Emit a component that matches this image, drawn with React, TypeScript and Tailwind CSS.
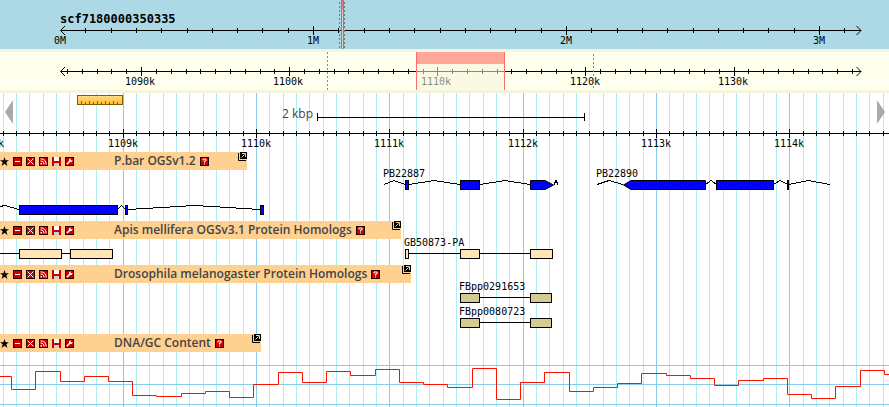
import type { ReactNode } from "react";

const range = (from: number, to: number) =>
  Array.from({ length: to - from + 1 }, (_, i) => from + i);

const MONO = "font-['DejaVu_Sans_Mono',monospace] text-[10px]";

const major = (k: number, first: number) => (((k - first) % 10) + 10) % 10 === 0;

/* ---------- rulers ---------- */

type RulerProps = {
  y: number;
  base: number;
  step: number;
  from: number;
  to: number;
  firstMajor: number;
};

function Ticks({ y, base, step, from, to, firstMajor }: RulerProps) {
  return (
    <g>
      {range(from, to).map((k) => {
        const x = Math.floor(base + k * step);
        const big = major(k, firstMajor);
        return (
          <rect key={k} x={x} y={big ? y - 4 : y - 2} width="1" height={big ? 9 : 5} />
        );
      })}
    </g>
  );
}

function ArrowLine({ y }: { y: number }) {
  return (
    <g>
      <rect x="61" y={y} width="800" height="1" />
      <path
        d={`M65 ${y - 4}L60.5 ${y + 0.5}L65 ${y + 5}M856.5 ${y - 4}L861 ${y + 0.5}L856.5 ${y + 5}`}
        fill="none"
        stroke="black"
      />
    </g>
  );
}

function Overview() {
  return (
    <section aria-label="Overview" className="h-[49px] bg-[#add8e6]">
      <svg className={`block h-full w-full ${MONO}`}>
        <text x="60" y="23" className="text-[12px] font-bold">
          scf7180000350335
        </text>
        <ArrowLine y={30} />
        <Ticks y={30} base={60.5} step={25.3} from={1} to={31} firstMajor={0} />
        {["0M", "1M", "2M", "3M"].map((t, i) => (
          <text key={t} x={54 + i * 253} y="44">
            {t}
          </text>
        ))}
        <rect x="341" y="0" width="3" height="10" fill="#e08080" />
        <rect x="342" y="10" width="1" height="39" fill="#d8d0c8" />
        <rect x="341" y="0" width="1" height="49" fill="#dd5c5c" />
        <rect x="343" y="0" width="1" height="49" fill="#dd5c5c" />
        <path d="M339.5 2V49M344.5 2V49" stroke="#777" strokeDasharray="2 2" />
      </svg>
    </section>
  );
}

function Region() {
  return (
    <section
      aria-label="Region"
      className="h-[44px] border-y-[3px] border-[#f5f5dc] bg-[#ffffee]"
    >
      <svg className={`block h-full w-full ${MONO}`}>
        <ArrowLine y={19} />
        <Ticks y={19} base={141.6} step={14.812} from={-5} to={48} firstMajor={0} />
        {["1090k", "1100k", "1110k", "1120k", "1130k"].map((t, i) => (
          <text key={t} x={125 + Math.round(i * 148.2)} y="33">
            {t}
          </text>
        ))}
        <path d="M327.5 0V38M593.5 2V38" stroke="#888" strokeDasharray="2 2" />
        <rect x="416" y="0" width="89" height="38" fill="#f5f5dc" opacity="0.55" />
        <rect x="416" y="0" width="89" height="12" fill="#ffa899" />
        <rect x="416" y="0" width="1" height="38" fill="#ff6b6b" />
        <rect x="504" y="0" width="1" height="38" fill="#ff6b6b" />
      </svg>
    </section>
  );
}

/* ---------- detail panel ---------- */

function Grid() {
  return (
    <svg aria-hidden className="absolute inset-0 h-full w-full">
      {range(0, 190).map((k) => (
        <rect
          key={k}
          x={Math.floor(3.1 + k * 13.3333)}
          y="0"
          width="1"
          height="100%"
          fill={major(k, 9) ? "#87ceeb" : "#afeeee"}
        />
      ))}
    </svg>
  );
}

function DetailRuler() {
  return (
    <div className="relative h-[59px]">
      <svg className={`block h-full w-full ${MONO}`}>
        <defs>
          <linearGradient id="gold" x1="0" y1="0" x2="0" y2="1">
            <stop offset="0" stopColor="#ffdc8c" />
            <stop offset="1" stopColor="#ffc02c" />
          </linearGradient>
        </defs>
        <rect x="77.5" y="2.5" width="45" height="9" fill="url(#gold)" stroke="#855c00" />
        {range(0, 9).map((i) => (
          <rect key={i} x={81 + i * 4} y={i % 2 ? 9 : 8} width="1" height={i % 2 ? 2 : 3} fill="#855c00" />
        ))}
        <text x="282" y="25" className="font-['Open_Sans',sans-serif] text-[12px]" fill="#444">
          2 kbp
        </text>
        <rect x="317" y="24" width="268" height="1" />
        <rect x="317" y="20" width="1" height="8" />
        <rect x="584" y="20" width="1" height="8" />
        <rect x="0" y="40" width="100%" height="1" />
        <Ticks y={40} base={3.1} step={13.3333} from={0} to={190} firstMajor={9} />
        {["1108k", "1109k", "1110k", "1111k", "1112k", "1113k", "1114k"].map((t, i) => (
          <text key={t} x={Math.floor(-26.2 + i * 133.3333) + 1} y="54">
            {t}
          </text>
        ))}
      </svg>
      <button aria-label="Scroll left" className="absolute top-[7px] left-[5px] h-6 w-2">
        <svg className="block h-6 w-2">
          <path d="M8 0V24L0 12Z" fill="#aaa" />
        </svg>
      </button>
      <button aria-label="Scroll right" className="absolute top-[7px] right-1 h-6 w-2">
        <svg className="block h-6 w-2">
          <path d="M0 0V24L8 12Z" fill="#aaa" />
        </svg>
      </button>
    </div>
  );
}

function Icon({ children }: { children: ReactNode }) {
  return (
    <svg width="9" height="9" viewBox="0 0 9 9" className="block">
      {children}
    </svg>
  );
}

const tile = (
  <rect x="0.5" y="0.5" width="8" height="8" fill="#cc0000" stroke="#200" />
);

const tools: { label: string; icon: ReactNode }[] = [
  {
    label: "Favorite",
    icon: <path d="M4.5 0L5.6 3.2H9L6.3 5.2L7.4 9L4.5 6.7L1.6 9L2.7 5.2L0 3.2H3.4Z" />,
  },
  {
    label: "Collapse",
    icon: (
      <>
        {tile}
        <rect x="2" y="4" width="5" height="1" fill="white" />
      </>
    ),
  },
  {
    label: "Turn off",
    icon: (
      <>
        {tile}
        <path d="M1.5 1.5L7.5 7.5M7.5 1.5L1.5 7.5" stroke="white" />
      </>
    ),
  },
  {
    label: "Share",
    icon: (
      <>
        {tile}
        <path d="M1.5 1.8C5 1.8 7.2 4 7.2 7.5M1.5 4C3.8 4 5 5.2 5 7.5" fill="none" stroke="white" />
        <rect x="1.5" y="6" width="1.5" height="1.5" fill="white" />
      </>
    ),
  },
  {
    label: "Download",
    icon: (
      <>
        <rect width="9" height="9" fill="#cc0000" />
        <rect x="2" y="0" width="5" height="4" fill="white" />
        <rect x="2" y="6" width="5" height="3" fill="#d0d0d0" />
      </>
    ),
  },
  {
    label: "Configure",
    icon: (
      <>
        {tile}
        <path d="M1.8 7.2L5 4" stroke="white" strokeWidth="1.5" />
        <path d="M4 4.6V2.4L5.6 1V3.2H7.8L6.6 5H4.4Z" fill="white" />
      </>
    ),
  },
];

function TrackHeader({ title, width }: { title: string; width: string }) {
  return (
    <header className={`relative flex h-[18px] items-center bg-[#ffd190] ${width}`}>
      <div className="flex w-[114px] gap-1">
        {tools.map((t) => (
          <button key={t.label} aria-label={`${t.label} ${title}`}>
            <Icon>{t.icon}</Icon>
          </button>
        ))}
      </div>
      <h2 className="font-['Open_Sans',sans-serif] text-[12px] leading-[18px] font-semibold whitespace-nowrap text-[#444]">
        {title}
      </h2>
      <button aria-label={`About ${title}`} className="ml-1">
        <Icon>
          {tile}
          <path d="M3 3.5V2H6V4H4.5V5.5M4.5 6.5V7.5" fill="none" stroke="white" />
        </Icon>
      </button>
      <button aria-label={`Pop out ${title}`} className="ml-auto self-start">
        <Icon>
          <path d="M0.5 1V8.5H8" fill="none" stroke="black" />
          <rect x="2" y="0" width="7" height="7" />
          <path d="M3.5 5.5L6.5 2.5M4 1.5H7.5V5" fill="none" stroke="#ffd190" />
        </Icon>
      </button>
    </header>
  );
}

type BoxProps = { x: number; y: number; w: number; fill?: string };

function Exon({ x, y, w, fill = "blue" }: BoxProps) {
  return (
    <rect x={x + 0.5} y={y + 0.5} width={w - 1} height="9" fill={fill} stroke="black" />
  );
}

function Introns({ points }: { points: string[] }) {
  return (
    <g fill="none" stroke="black" shapeRendering="crispEdges">
      {points.map((p) => (
        <polyline key={p} points={p} />
      ))}
    </g>
  );
}

function GenePanel() {
  return (
    <svg className={`block h-[51px] w-full overflow-visible ${MONO}`}>
      <Introns
        points={[
          "384,14.5 394,10.5 405,14.5",
          "409,14.5 434,10.5 460,14.5",
          "480,14.5 505,10.5 530,14.5",
          "554,14.5 556,10.5 558,14.5",
          "597,14.5 609,10.5 623,14.5",
          "706,14 711,10.5 716,14",
          "774,14 780,10.5 787,14",
          "789,14.5 808,10.5 830,14.5",
          "0,36.5 5,35.5 19,39.5",
          "118,39 121.5,35.5 125,39",
          "128,39.5 195,35.5 260,39.5",
        ]}
      />
      <text x="383" y="7">PB22887</text>
      <Exon x={405} y={10} w={4} />
      <Exon x={460} y={10} w={20} />
      <path d="M530.5 10.5H545L553.5 15L545 19.5H530.5Z" fill="blue" stroke="black" />
      <text x="596" y="7">PB22890</text>
      <path d="M705.5 10.5H631L623.5 15L631 19.5H705.5Z" fill="blue" stroke="black" />
      <Exon x={716} y={10} w={58} />
      <rect x="787" y="10" width="2" height="10" />
      <Exon x={19} y={35} w={99} />
      <Exon x={125} y={35} w={3} />
      <Exon x={260} y={35} w={4} />
    </svg>
  );
}

function ApisPanel() {
  const fill = "#ffe4b5";
  return (
    <svg className={`block h-[26px] w-full overflow-visible ${MONO}`}>
      <rect x="0" y="14" width="100" height="1" />
      <rect x="405" y="14" width="140" height="1" />
      <text x="404" y="7">GB50873-PA</text>
      <Exon x={19} y={10} w={43} fill={fill} />
      <Exon x={70} y={10} w={43} fill={fill} />
      <Exon x={405} y={10} w={4} fill={fill} />
      <Exon x={460} y={10} w={20} fill={fill} />
      <Exon x={530} y={10} w={23} fill={fill} />
    </svg>
  );
}

function DrosophilaPanel() {
  return (
    <svg className={`block h-[51px] w-full overflow-visible ${MONO}`}>
      {["FBpp0291653", "FBpp0080723"].map((name, i) => (
        <g key={name}>
          <text x="459" y={7 + i * 25}>
            {name}
          </text>
          <rect x="470" y={14 + i * 25} width="70" height="1" />
          <Exon x={460} y={10 + i * 25} w={20} fill="#d4cb93" />
          <Exon x={530} y={10 + i * 25} w={22} fill="#d4cb93" />
        </g>
      ))}
    </svg>
  );
}

// Each pair is the right edge of a window and its GC level within the panel.
const gc: [number, number][] = [
  [11, 24], [35, 37], [60, 19], [84, 29], [108, 24], [132, 29], [156, 43],
  [181, 44], [205, 41], [229, 39], [253, 45], [278, 32], [302, 20], [326, 30],
  [350, 19], [375, 23], [399, 17], [423, 30], [447, 32], [472, 35], [496, 16],
  [520, 47], [544, 30], [569, 20], [593, 39], [617, 35], [641, 31], [666, 21],
  [690, 23], [714, 26], [738, 33], [763, 28], [787, 26], [811, 42], [835, 46],
  [860, 34], [884, 18], [908, 22],
];

function GcPanel() {
  const d = gc.map(([x, y], i) => `${i ? "V" : "M0 "}${y + 0.5}H${x + 0.5}`).join("");
  return (
    <svg className="block h-[55px] w-full">
      {[13, 32, 52].map((y) => (
        <rect key={y} x="0" y={y} width="100%" height="1" fill="#87ceeb" />
      ))}
      <path d={d} fill="none" stroke="#ff1100" />
    </svg>
  );
}

export default function App() {
  return (
    <main className="w-full overflow-hidden bg-white text-black">
      <Overview />
      <Region />
      <section aria-label="Details" className="relative">
        <Grid />
        <div className="relative">
          <DetailRuler />
          <TrackHeader title="P.bar OGSv1.2" width="w-[247px]" />
          <GenePanel />
          <TrackHeader title="Apis mellifera OGSv3.1 Protein Homologs" width="w-[401px]" />
          <ApisPanel />
          <TrackHeader title="Drosophila melanogaster Protein Homologs" width="w-[411px]" />
          <DrosophilaPanel />
          <TrackHeader title="DNA/GC Content" width="w-[261px]" />
          <GcPanel />
        </div>
      </section>
    </main>
  );
}
